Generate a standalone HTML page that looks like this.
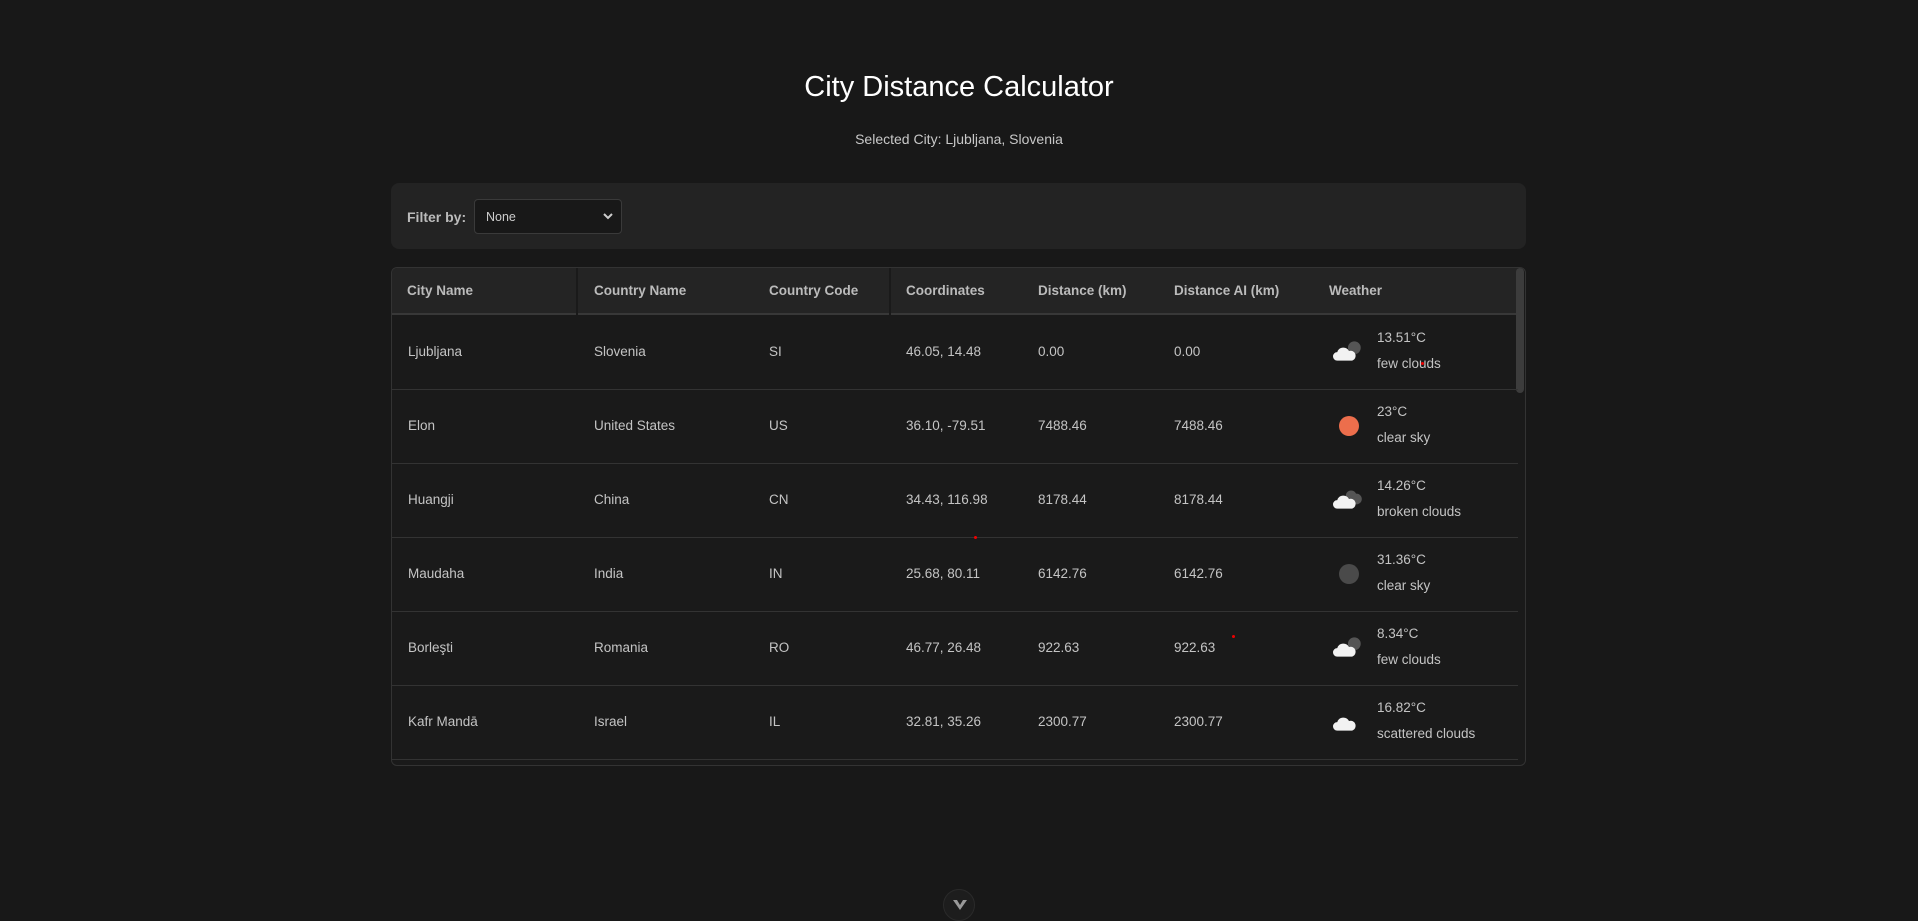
<!DOCTYPE html>
<html><head><meta charset="utf-8"><style>
*{box-sizing:border-box;margin:0;padding:0}
body{width:1918px;height:908px;background:#181818;font-family:"Liberation Sans",sans-serif;color:#c8c8c8;position:relative;overflow:hidden}
h1{position:absolute;top:71px;left:0;width:100%;text-align:center;font-weight:400;font-size:29px;color:#fff}
.sub{position:absolute;top:131px;width:100%;text-align:center;font-size:14px;color:#c8c8c8}
.panel{position:absolute;left:391px;top:183px;width:1135px;height:66px;background:#232323;border-radius:8px}
.panel label{position:absolute;left:16px;top:26px;font-size:14px;font-weight:bold;color:#bbb}
.sel{position:absolute;left:83px;top:16px;width:148px;height:35px;background:#181818;border:1px solid #3a3a3a;border-radius:4px;font-size:12.5px;color:#ccc;padding:10px 11px}
.sel svg{position:absolute;right:8px;top:13px}
.tbl{position:absolute;left:391px;top:267px;width:1135px;height:499px;border:1px solid #333;border-radius:6px;overflow:hidden;background:#1a1a1a}
.hd{position:absolute;left:0;top:0;width:1126px;height:47px;background:#242424;border-bottom:2px solid #383838;font-weight:bold;font-size:13.5px;color:#bbb}
.c{position:absolute;white-space:nowrap}
.row{position:absolute;left:0;width:1126px;height:74px;border-bottom:1px solid #333;font-size:13.5px;color:#c4c4c4}
.sb{position:absolute;right:1px;top:0;width:8px;height:125px;background:#3c3c3c;border-radius:4px}
.dot{position:absolute;width:3px;height:3px;background:#e00;border-radius:50%}
.chev{position:absolute;left:943px;top:889px;width:32px;height:32px;border-radius:50%;background:#1d1d1d;border:1px solid #2a2a2a}
</style></head><body>
<h1>City Distance Calculator</h1>
<div class="sub">Selected City: Ljubljana, Slovenia</div>
<div class="panel"><label>Filter by:</label><div class="sel">None<svg width="10" height="7" viewBox="0 0 10 7"><path d="M1 1l4 4 4-4" stroke="#ccc" stroke-width="2" fill="none"/></svg></div></div>
<div class="tbl">
<div class="hd">
<div style="position:absolute;left:184px;top:0;width:2px;height:47px;background:#1a1a1a"></div>
<div style="position:absolute;left:497px;top:0;width:2px;height:47px;background:#1a1a1a"></div>
<span class="c" style="left:15px;top:15px">City Name</span>
<span class="c" style="left:202px;top:15px">Country Name</span>
<span class="c" style="left:377px;top:15px">Country Code</span>
<span class="c" style="left:514px;top:15px">Coordinates</span>
<span class="c" style="left:646px;top:15px">Distance (km)</span>
<span class="c" style="left:782px;top:15px">Distance AI (km)</span>
<span class="c" style="left:937px;top:15px">Weather</span>
</div>
<div class="sb"></div>
<div class="row" style="top:48px"><span class="c" style="left:16px;top:28px">Ljubljana</span><span class="c" style="left:202px;top:28px">Slovenia</span><span class="c" style="left:377px;top:28px">SI</span><span class="c" style="left:514px;top:28px">46.05, 14.48</span><span class="c" style="left:646px;top:28px">0.00</span><span class="c" style="left:782px;top:28px">0.00</span>
<svg class="c" style="left:941px;top:22px" width="32" height="26" viewBox="0 0 30 22"><circle cx="20" cy="8" r="6" fill="#555"/><path d="M4 20a4 4 0 010-8 6 6 0 0111-1 4.5 4.5 0 013 9z" fill="#f2f2f2"/></svg>
<span class="c" style="left:985px;top:14px">13.51°C</span><span class="c" style="left:985px;top:40px">few clouds</span></div>
<div class="row" style="top:122px"><span class="c" style="left:16px;top:28px">Elon</span><span class="c" style="left:202px;top:28px">United States</span><span class="c" style="left:377px;top:28px">US</span><span class="c" style="left:514px;top:28px">36.10, -79.51</span><span class="c" style="left:646px;top:28px">7488.46</span><span class="c" style="left:782px;top:28px">7488.46</span>
<div class="c" style="left:947px;top:26px;width:20px;height:20px;border-radius:50%;background:#ec6e4c"></div>
<span class="c" style="left:985px;top:14px">23°C</span><span class="c" style="left:985px;top:40px">clear sky</span></div>
<div class="row" style="top:196px"><span class="c" style="left:16px;top:28px">Huangji</span><span class="c" style="left:202px;top:28px">China</span><span class="c" style="left:377px;top:28px">CN</span><span class="c" style="left:514px;top:28px">34.43, 116.98</span><span class="c" style="left:646px;top:28px">8178.44</span><span class="c" style="left:782px;top:28px">8178.44</span>
<svg class="c" style="left:941px;top:22px" width="32" height="26" viewBox="0 0 30 22"><circle cx="17" cy="8" r="5" fill="#555"/><circle cx="22" cy="11" r="5" fill="#555"/><path d="M4 20a4 4 0 010-8 6 6 0 0111-1 4.5 4.5 0 013 9z" fill="#f2f2f2"/></svg>
<span class="c" style="left:985px;top:14px">14.26°C</span><span class="c" style="left:985px;top:40px">broken clouds</span></div>
<div class="row" style="top:270px"><span class="c" style="left:16px;top:28px">Maudaha</span><span class="c" style="left:202px;top:28px">India</span><span class="c" style="left:377px;top:28px">IN</span><span class="c" style="left:514px;top:28px">25.68, 80.11</span><span class="c" style="left:646px;top:28px">6142.76</span><span class="c" style="left:782px;top:28px">6142.76</span>
<div class="c" style="left:947px;top:26px;width:20px;height:20px;border-radius:50%;background:#4a4a4a"></div>
<span class="c" style="left:985px;top:14px">31.36°C</span><span class="c" style="left:985px;top:40px">clear sky</span></div>
<div class="row" style="top:344px"><span class="c" style="left:16px;top:28px">Borleşti</span><span class="c" style="left:202px;top:28px">Romania</span><span class="c" style="left:377px;top:28px">RO</span><span class="c" style="left:514px;top:28px">46.77, 26.48</span><span class="c" style="left:646px;top:28px">922.63</span><span class="c" style="left:782px;top:28px">922.63</span>
<svg class="c" style="left:941px;top:22px" width="32" height="26" viewBox="0 0 30 22"><circle cx="20" cy="8" r="6" fill="#555"/><path d="M4 20a4 4 0 010-8 6 6 0 0111-1 4.5 4.5 0 013 9z" fill="#f2f2f2"/></svg>
<span class="c" style="left:985px;top:14px">8.34°C</span><span class="c" style="left:985px;top:40px">few clouds</span></div>
<div class="row" style="top:418px"><span class="c" style="left:16px;top:28px">Kafr Mandā</span><span class="c" style="left:202px;top:28px">Israel</span><span class="c" style="left:377px;top:28px">IL</span><span class="c" style="left:514px;top:28px">32.81, 35.26</span><span class="c" style="left:646px;top:28px">2300.77</span><span class="c" style="left:782px;top:28px">2300.77</span>
<svg class="c" style="left:941px;top:22px" width="32" height="26" viewBox="0 0 30 22"><path d="M4 20a4 4 0 010-8 6 6 0 0111-1 4.5 4.5 0 013 9z" fill="#f2f2f2"/></svg>
<span class="c" style="left:985px;top:14px">16.82°C</span><span class="c" style="left:985px;top:40px">scattered clouds</span></div>
<div class="row" style="top:492px"></div>
</div>
<div class="dot" style="left:974px;top:536px"></div>
<div class="dot" style="left:1232px;top:635px"></div>
<div class="dot" style="left:1421px;top:362px"></div>
<div class="chev"><svg style="position:absolute;left:8px;top:9px" width="16" height="12" viewBox="0 0 16 12"><path d="M1 1l7 10 7-10h-4l-3 5-3-5z" fill="#999"/></svg></div>
</body></html>
